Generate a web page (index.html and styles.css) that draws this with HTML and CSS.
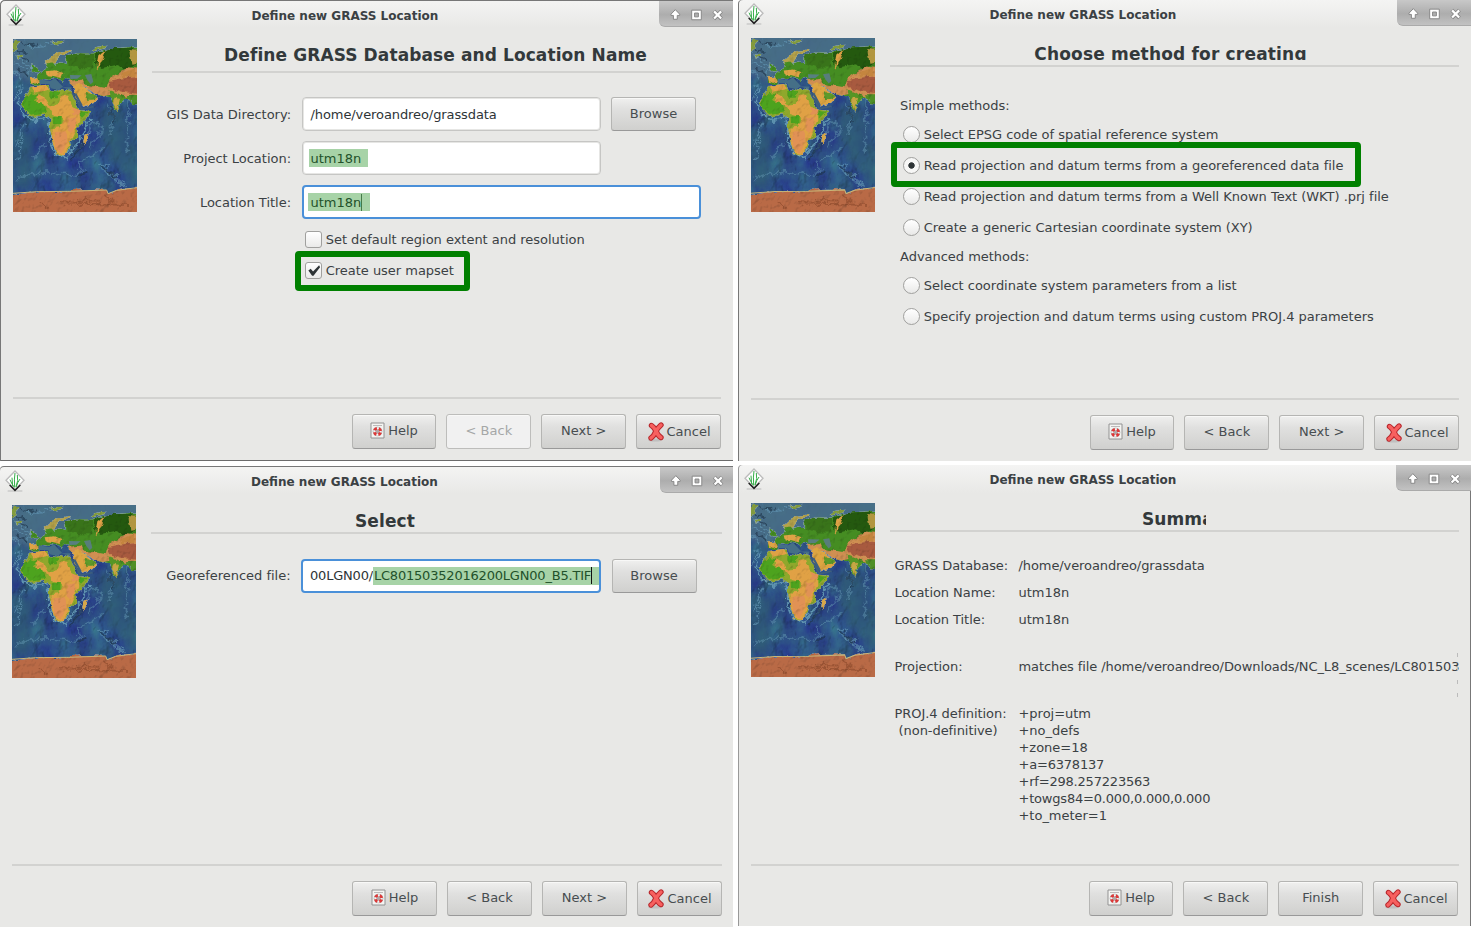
FILE: index.html
```html
<!DOCTYPE html>
<html lang="en">
<head>
<meta charset="utf-8">
<title>Define new GRASS Location</title>
<link rel="stylesheet" href="styles.css">
</head>
<body>
<svg class="defs" width="0" height="0" aria-hidden="true">
  <defs>
    <filter id="sea" x="0" y="0" width="100%" height="100%" color-interpolation-filters="sRGB">
      <feTurbulence type="fractalNoise" baseFrequency="0.018 0.013" numOctaves="5" seed="12" result="n"/>
      <feDiffuseLighting in="n" surfaceScale="8" diffuseConstant="1.2" lighting-color="#fff" result="l"><feDistantLight azimuth="215" elevation="60"/></feDiffuseLighting>
      <feColorMatrix in="n" type="matrix" values="0.1 0 0 0 0.13  0.35 0 0 0 0.15  0 0.1 0 0 0.48  0 0 0 0 1" result="c"/>
      <feBlend in="c" in2="l" mode="multiply" result="m"/>
      <feComposite in="m" in2="SourceGraphic" operator="in"/>
    </filter>
    <filter id="land" x="-5%" y="-5%" width="110%" height="110%" color-interpolation-filters="sRGB">
      <feTurbulence type="fractalNoise" baseFrequency="0.05" numOctaves="3" seed="5" result="n"/>
      <feDisplacementMap in="SourceGraphic" in2="n" scale="15" xChannelSelector="R" yChannelSelector="G" result="d"/>
      <feDiffuseLighting in="n" surfaceScale="2.5" diffuseConstant="1.17" lighting-color="#fff" result="l"><feDistantLight azimuth="225" elevation="60"/></feDiffuseLighting>
      <feBlend in="d" in2="l" mode="multiply" result="m"/>
      <feComposite in="m" in2="d" operator="in"/>
    </filter>
    <filter id="soft"><feGaussianBlur stdDeviation="1.5"/></filter>
    <filter id="ridge" x="-5%" y="-5%" width="110%" height="110%">
      <feTurbulence type="fractalNoise" baseFrequency="0.06" numOctaves="3" seed="8" result="n"/>
      <feDisplacementMap in="SourceGraphic" in2="n" scale="28" xChannelSelector="R" yChannelSelector="G" result="d"/>
      <feGaussianBlur in="d" stdDeviation="1.4"/>
    </filter>
    <filter id="haze"><feGaussianBlur stdDeviation="9"/></filter>
    <symbol id="map" viewBox="39 117 372 519" preserveAspectRatio="none">
      <rect x="39" y="117" width="372" height="519" filter="url(#sea)"/>
      <path d="M20 100H430V185L250 190L90 245L20 220Z" fill="#4b7187" opacity=".85" filter="url(#haze)"/>
      <path d="M39 390L110 400L90 560L39 560ZM300 330L330 480L411 560V440L360 300Z" fill="#2f5a72" opacity=".6" filter="url(#haze)"/>
      <g fill="none" stroke="#5f93b0" filter="url(#ridge)">
        <path d="M68 260Q50 300 64 340L105 362L145 356L151 425L168 465L198 477L226 435L248 410L268 355" stroke-width="5"/>
        <path d="M46 540Q95 510 180 522T235 487L310 448M230 450Q270 410 272 370Q300 360 305 395L270 440M98 475L138 430M384 300L382 460M320 305L340 350L330 410M240 520L260 505M300 500Q330 530 380 555" stroke-width="5" opacity=".5"/>
        <path d="M43 165L100 205M47 188L90 220M65 125Q90 150 120 142L165 127M42 210L66 240M44 300L58 260M70 370L48 440M70 400L52 480M300 485L325 500L322 520L350 525L345 545L375 550" stroke-width="4" opacity=".7"/>
      </g>
      <g fill="none" stroke="#1c3147" stroke-width="6" opacity=".6" filter="url(#ridge)"><path d="M62 126Q90 145 113 128M58 170L90 181M52 208L86 230M210 482L250 425M330 320L345 370M50 148L80 160M232 530L262 515M305 495L350 535"/></g>
      <g filter="url(#land)">
        <path d="M39 122L58 123L52 145L39 155ZM50 166L73 167L70 174L53 175ZM150 125L193 122L189 130L164 134ZM272 150Q287 138 320 137L316 145L280 154Z" fill="#829b3d"/>
        <path d="M94 193L112 200L121 216L105 217L96 209ZM120 217L137 207L143 191L160 182L164 194L180 187L198 191L196 178L214 171L243 160L277 164L302 152L337 145L420 139V310L399 302L389 292L369 300L357 317L349 336L339 315L328 291L300 288L282 277L263 265L249 255L215 258L204 248L210 240L197 233L189 246L175 235L159 232L148 240L130 237L117 254L92 254L90 236L110 233L114 222Z" fill="#458d22"/>
        <path d="M133 187L158 165L177 155L208 151L212 157L187 164L174 178L170 190L151 191L138 194Z" fill="#b4a24b"/>
        <path d="M289 160L331 145L400 143L411 153V190L385 211L349 195L305 204L285 190Z" fill="#24590f"/>
        <path d="M199 169L231 160L284 160L279 205L237 205L203 193Z" fill="#39741a"/>
        <path d="M91 234L111 232L116 244L97 252ZM137 214L165 211L190 222L185 234L164 228L140 226ZM290 210L298 166L318 150L312 168L300 195Z" fill="#dfa346"/>
        <path d="M205 242L247 239L255 254L279 257L319 264L328 238L361 217L389 202L420 208V303L384 292L353 282L332 284L309 289L278 279L254 261L215 257Z" fill="#cf8f52"/>
        <path d="M326 243L368 235L420 231V282L367 276L333 264Z" fill="#a85a3f"/>
        <path d="M364 219L409 205L406 230L366 232Z" fill="#c4853f"/>
        <path d="M388 150L420 152V190L394 194Z" fill="#b29640"/>
        <path d="M219 260L233 248L266 272L295 296L283 310L247 321L229 294Z" fill="#dda542"/>
        <path d="M255 274L294 292L280 299L261 299Z" fill="#5d9a2a"/>
        <path d="M328 270L353 279L375 296L359 313L350 336L339 319Z" fill="#569626"/>
        <path d="M345 292L360 297L350 337L338 303Z" fill="#c7a744"/>
        <path d="M380 285L420 285V315L400 312Z" fill="#4f8f26"/>
        <path d="M90 264L118 255L146 255L151 269L174 273L186 264L214 272L225 302L238 330L270 334L256 361L231 386L235 409L216 423L209 446L186 468L169 465L157 427L149 377L151 355L134 345L94 353L70 329L66 300L79 281Z" fill="#8fa82c"/>
        <path d="M92 260L139 254L145 269L104 278ZM114 285L138 298L150 318L173 316L188 282L205 288L217 321L236 332L241 360L230 385L213 425L193 466L169 463L157 421L154 385L180 382L193 354L156 344L143 317L113 315Z" fill="#e0a145"/>
        <path d="M71 293L94 280L114 286L103 306L128 307L139 339L93 347L71 329ZM151 270L181 276L173 295L152 295ZM158 352L185 350L184 372L159 373ZM242 334L263 337L243 356Z" fill="#4da31e"/>
        <path d="M220 323L238 330L239 346L219 343ZM205 354L223 349L232 373L215 400L202 383ZM164 396L199 394L203 424L184 460L168 448Z" fill="#e19255"/>
        <path d="M250 407L266 400L262 421L252 437L247 426Z" fill="#d6a74b"/>
        <path d="M20 588L87 578L136 573L188 578L214 570L266 567L320 570L325 583L349 572L379 565L430 563V660H20Z" fill="#b96a46"/>
      </g>
      <path d="M218 278L246 325L279 318L282 322L244 331L214 280ZM229 280L248 316L243 318L222 282Z" fill="#3f5f7c"/>
      <path d="M255 225L274 222L280 245L272 253L262 240Z" fill="#587d7b"/>
      <path d="M210 225L245 226L232 236L211 237Z" fill="#587f80"/>
      <path d="M120 238L150 243L165 235L190 262L215 262L212 270L187 262L175 270L152 265L148 253L118 252Z" fill="#456f87"/>
      <path d="M39 580L110 575L210 574L320 570L324 581L350 571L411 563" fill="none" stroke="#c9b678" stroke-width="3"/>
      <path d="M230 600L302 602M120 605L145 625M180 610L390 615M310 585L340 605" fill="none" stroke="#74391f" stroke-width="6" opacity=".4" filter="url(#ridge)"/>
    </symbol>
    <symbol id="logo" viewBox="0 0 60 66">
      <path d="M8 63H52" stroke="#bbb" stroke-width="3"/>
      <path d="M30 3L57 31L30 59L3 31Z" fill="#fff" stroke="#bcbcbc" stroke-width="4"/>
      <path d="M14 45L30 61L46 45" fill="none" stroke="#222" stroke-width="4.500"/>
      <path d="M29 52Q27 24 30 9M28 52Q20 42 15 29M33 52Q37 37 45 27M23 48L21 23M33 50Q41 31 37 15" fill="none" stroke="#35ad48" stroke-width="3"/>
    </symbol>
    <symbol id="controls" viewBox="0 0 74 26">
      <path d="M15.500 9L20 13.700V15H17.500V19H13.500V15H11V13.700Z" fill="#fff" stroke="#858585" stroke-linejoin="round"/>
      <path d="M32.500 9.500H42.500V19.500H32.500ZM35.500 12.500H39.500V16.500H35.500Z" fill="#fff" fill-rule="evenodd" stroke="#858585"/>
      <path d="M55.500 10.500L63.500 18.500M63.500 10.500L55.500 18.500" stroke="#858585" stroke-width="4"/>
      <path d="M55.800 10.800L63.200 18.200M63.200 10.800L55.800 18.200" stroke="#fff" stroke-width="2.300"/>
    </symbol>
    <symbol id="help" viewBox="0 0 15 17">
      <path d="M1 1H14V16H1Z" fill="#f4f4f2" stroke="#929292"/>
      <path d="M3 3.500H12" stroke="#bbb"/>
      <circle cx="7.500" cy="9.500" r="4.800" fill="#a3a7a7"/>
      <circle cx="7.500" cy="9.500" r="3.200" fill="none" stroke="#f5f5f5" stroke-width="2"/>
      <circle cx="7.500" cy="9.500" r="3.200" fill="none" stroke="#dd3838" stroke-width="2.800" stroke-dasharray="3 2.027" stroke-dashoffset="-1.010"/>
      <circle cx="7.500" cy="9.500" r="1.400" fill="#b9a5a5"/>
    </symbol>
    <symbol id="cancel" viewBox="0 0 18 20">
      <ellipse cx="8" cy="18" rx="7" ry="1.600" fill="#aaa" opacity=".5"/>
      <path d="M4.500 3.500Q7 5 9 9Q11 14 14 15.500M14 3Q10.500 6 8.500 10Q7 14 4 16" fill="none" stroke="#b7272c" stroke-width="5.400" stroke-linecap="round"/>
      <path d="M4.500 3.500Q7 5 9 9Q11 14 14 15.500M14 3Q10.500 6 8.500 10Q7 14 4 16" fill="none" stroke="#f7605f" stroke-width="3.400" stroke-linecap="round"/>
    </symbol>
  </defs>
</svg>

<main class="screens">
  <section class="window w1">
    <header class="titlebar"><svg class="logo"><use href="#logo"/></svg><span class="caption">Define new GRASS Location</span><svg class="controls"><use href="#controls"/></svg></header>
    <div class="content">
      <svg class="map"><use href="#map"/></svg>
      <div class="page">
        <h1 class="heading">Define GRASS Database and Location Name</h1>
        <div class="form">
          <label>GIS Data Directory:</label><div class="field"><span class="value path">/home/veroandreo/grassdata</span></div><button class="btn">Browse</button>
          <label>Project Location:</label><div class="field"><span class="mark mark-a">utm18n</span></div>
          <label class="row-start">Location Title:</label><div class="field wide focus"><span class="mark mark-b">utm18n<i class="caret"></i></span></div>
        </div>
        <div class="checks">
          <div class="option"><span class="box"></span>Set default region extent and resolution</div>
          <div class="option"><span class="box"><svg viewBox="0 0 16 16"><path d="M2.500 8L5 6L7.500 9L14 2.500L15 4.500L8 13.500H6.500Z" fill="#2e3436"/></svg></span>Create user mapset<i class="outline outline-check"></i></div>
        </div>
      </div>
    </div>
    <footer class="actions"><button class="btn"><svg class="help"><use href="#help"/></svg>Help</button><button class="btn" disabled>&lt; Back</button><button class="btn">Next &gt;</button><button class="btn low"><svg class="cancel"><use href="#cancel"/></svg>Cancel</button></footer>
  </section>

  <section class="window w2">
    <header class="titlebar"><svg class="logo"><use href="#logo"/></svg><span class="caption">Define new GRASS Location</span><svg class="controls"><use href="#controls"/></svg></header>
    <div class="content">
      <svg class="map"><use href="#map"/></svg>
      <div class="page">
        <h1 class="heading"><span class="clip-low">Choose method for creating</span></h1>
        <div class="methods">
          <p class="group first">Simple methods:</p>
          <div class="option"><span class="radio"></span>Select EPSG code of spatial reference system</div>
          <div class="option"><span class="radio on"></span>Read projection and datum terms from a georeferenced data file<i class="outline outline-radio"></i></div>
          <div class="option"><span class="radio"></span>Read projection and datum terms from a Well Known Text (WKT) .prj file</div>
          <div class="option"><span class="radio"></span>Create a generic Cartesian coordinate system (XY)</div>
          <p class="group">Advanced methods:</p>
          <div class="option"><span class="radio"></span>Select coordinate system parameters from a list</div>
          <div class="option"><span class="radio"></span>Specify projection and datum terms using custom PROJ.4 parameters</div>
        </div>
      </div>
    </div>
    <footer class="actions"><button class="btn"><svg class="help"><use href="#help"/></svg>Help</button><button class="btn">&lt; Back</button><button class="btn">Next &gt;</button><button class="btn low"><svg class="cancel"><use href="#cancel"/></svg>Cancel</button></footer>
  </section>

  <section class="window w3">
    <header class="titlebar"><svg class="logo"><use href="#logo"/></svg><span class="caption">Define new GRASS Location</span><svg class="controls"><use href="#controls"/></svg></header>
    <div class="content">
      <svg class="map"><use href="#map"/></svg>
      <div class="page">
        <h1 class="heading"><span class="select">Select</span></h1>
        <div class="form">
          <label>Georeferenced file:</label><div class="field focus file"><span class="value">00LGN00/</span><span class="mark mark-c">LC80150352016200LGN00_B5.TIF<i class="caret dark"></i></span></div><button class="btn">Browse</button>
        </div>
      </div>
    </div>
    <footer class="actions"><button class="btn"><svg class="help"><use href="#help"/></svg>Help</button><button class="btn">&lt; Back</button><button class="btn">Next &gt;</button><button class="btn low"><svg class="cancel"><use href="#cancel"/></svg>Cancel</button></footer>
  </section>

  <section class="window w4">
    <header class="titlebar"><svg class="logo"><use href="#logo"/></svg><span class="caption">Define new GRASS Location</span><svg class="controls"><use href="#controls"/></svg></header>
    <div class="content">
      <svg class="map"><use href="#map"/></svg>
      <div class="page">
        <h1 class="heading"><span class="clip-side">Summa</span></h1>
        <dl class="summary">
          <dt>GRASS Database:</dt><dd class="path">/home/veroandreo/grassdata</dd>
          <dt>Location Name:</dt><dd>utm18n</dd>
          <dt>Location Title:</dt><dd>utm18n</dd>
          <dt class="spaced">Projection:</dt><dd class="spaced cut"><span class="path line">matches file /home/veroandreo/Downloads/NC_L8_scenes/LC801503</span><i class="dashes"></i></dd>
          <dt class="spaced">PROJ.4 definition:<br>&nbsp;(non-definitive)</dt><dd class="spaced">+proj=utm<br>+no_defs<br>+zone=18<br><span class="digits">+a=6378137<br>+rf=298.257223563<br>+towgs84=0.000,0.000,0.000</span><br>+to_meter=1</dd>
        </dl>
      </div>
    </div>
    <footer class="actions"><button class="btn"><svg class="help"><use href="#help"/></svg>Help</button><button class="btn">&lt; Back</button><button class="btn">Finish</button><button class="btn low"><svg class="cancel"><use href="#cancel"/></svg>Cancel</button></footer>
  </section>
</main>
</body>
</html>
```

FILE: styles.css
```css
* { box-sizing: border-box; }
body { margin: 0; background: #fff; font: 13px/17px "DejaVu Sans", sans-serif; letter-spacing: -.02px; color: #3b4144; overflow: hidden; }
.defs { position: absolute; }
svg { display: block; flex: none; }
p, dl, dd { margin: 0; }
i { font-style: normal; }

.screens { display: grid; grid-template-columns: 733px 733px; column-gap: 5px; grid-template-rows: 465px 462px; width: 1471px; height: 927px; }
.window { display: flex; flex-direction: column; height: 461px; background: linear-gradient(#f4f4f3, #e8e8e6 28px); overflow: hidden; }
.w1 { border-radius: 5px 0 0; box-shadow: inset 1px 0 #777, inset 0 -1px #6b6b6b, inset 0 1px #777; }
.w2 { border-radius: 4px 0 0; box-shadow: inset 1px 0 #777; }
.w3 { margin-top: 1px; border-radius: 4px 0 0; box-shadow: inset 0 1px #777; }
.w4 { border-radius: 4px 0 0; box-shadow: inset 1px 0 #999, inset -1px 0 #777; }

.titlebar { display: flex; align-items: flex-start; height: 39px; padding: 4px 0 0 6px; flex: none; }
.logo { width: 20px; height: 22px; }
.caption { width: 190px; margin: 4px 0 0 225.500px; font-size: 12px; font-weight: bold; white-space: nowrap; letter-spacing: 0; }
.controls { width: 74px; height: 26px; margin: -3px 0 0 auto; background: linear-gradient(#c8c8c8, #adadad 55%, #c2c2c2); border-bottom: 1px solid #aaa; border-radius: 0 0 0 6px; }
.w2 .titlebar, .w4 .titlebar { height: 38px; padding-top: 3px; }
.w3 .titlebar { padding-left: 5px; }
.w3 .caption { margin-left: 226px; }
.w3 .controls { width: 73px; }
.w4 .controls { width: 75px; }

.content { display: flex; gap: 15px; flex: 0 0 360px; margin: 0 12px 0 13px; border-bottom: 2px solid #d2d2d0; }
.w2 .content { flex-basis: 362px; }
.w3 .content { margin: 0 11px 0 12px; flex-basis: 361px; }
.w4 .content { flex-basis: 363px; }
.map { width: 124px; height: 173px; }
.w2 .map, .w4 .map { height: 174px; }
.page { flex: 1; min-width: 0; }
.heading { height: 34px; margin: 0; padding-top: 5px; border-bottom: 2px solid #d2d2d0; text-align: center; text-indent: -2px; font-size: 17px; line-height: 22px; letter-spacing: .1px; font-weight: bold; white-space: nowrap; color: #33393b; }
.w2 .heading, .w3 .heading, .w4 .heading { height: 29px; }
.clip-low { display: inline-block; height: 17px; overflow: hidden; margin-right: 6px; text-indent: 0; letter-spacing: .18px; }
.select { margin-right: 101px; }
.clip-side { display: block; width: 64px; margin-left: 252px; overflow: hidden; text-indent: 0; text-align: left; }

.form { display: grid; grid-template-columns: 139px 299px 85px; column-gap: 10.500px; row-gap: 10px; align-items: center; padding-top: 24px; }
.form label { text-align: right; white-space: nowrap; }
.form .btn { height: 34px; }
.row-start { grid-column: 1; }
.field { display: flex; align-items: center; height: 34px; padding: 0 8px; background: #fff; border: 1px solid #c6c6c4; border-radius: 4px; box-shadow: inset 0 0 0 1px #e6e6e4; color: #2e3436; white-space: nowrap; overflow: hidden; }
.field.wide { grid-column: 2 / span 2; width: 399px; }
.field.focus { padding: 0 7px; border: 2px solid #4a90d9; box-shadow: none; }
.w3 .form { grid-template-columns: 139.500px 300px 85px; padding-top: 25px; }
.w3 .form label { margin-top: -1px; }
.mark { display: flex; align-items: center; height: 18px; background: #a7d3a7; color: #22512a; }
.mark-a { margin-left: -2px; padding: 0 7px 0 2px; }
.mark-b { margin-left: -3px; padding: 0 8px 0 3px; }
.mark-c { padding: 0 8px 0 1px; }
.caret { width: 1px; height: 17px; background: #457a49; }
.caret.dark { background: #111; }
.field.file { padding-right: 0; padding-bottom: 1px; letter-spacing: -.2px; }
.path { letter-spacing: -.09px; }

.btn { display: flex; align-items: center; justify-content: center; gap: 3px; width: 85px; height: 35px; padding: 0 0 2px; font: inherit; letter-spacing: 0; color: #474d50; background: linear-gradient(#f0f0ef, #e0e0df 35%, #d0d0ce); border: 1px solid #b5b5b3; border-bottom-color: #999; border-radius: 3px; box-shadow: inset 0 1px #f8f8f7; white-space: nowrap; }
.form .btn { padding-bottom: 1px; }
.btn:disabled { background: #f1f1f1; color: #a5a7a7; border-color: #bdbdbb; }
.low { padding-bottom: 0; gap: 2px; }
.help { width: 15px; height: 17px; }
.cancel { width: 18px; height: 20px; }
.actions { display: flex; justify-content: flex-end; gap: 10px; padding: 15px 12px 0 0; }
.actions .btn { width: 84.850px; }
.w3 .actions .btn { width: 85px; }
.w3 .actions { padding-right: 11px; }
.w4 .actions { padding: 15px 13px 0 0; }

.checks { display: flex; flex-direction: column; gap: 14px; padding: 12px 0 0 153px; }
.option { position: relative; display: flex; align-items: center; height: 17px; gap: 3.700px; white-space: nowrap; }
.box { width: 17px; height: 17px; border: 1px solid #a0a09e; border-radius: 3px; background: linear-gradient(#fff, #eaeae9); }
.box svg { width: 15px; height: 15px; }
.outline { position: absolute; border: 6px solid #008000; border-radius: 4px; }
.outline-check { left: -10px; top: -11px; width: 175px; height: 40px; }
.outline-radio { left: -12px; top: -15px; width: 470px; height: 45px; }

.methods { display: flex; flex-direction: column; gap: 14px; padding: 30px 0 0 13px; }
.group { margin: -2px 0 -2px -3px; height: 17px; }
.group.first { margin: 0 0 -2px -3px; }
.radio { width: 17px; height: 17px; border: 1px solid #a0a09e; border-radius: 50%; background: linear-gradient(#fff, #e9e9e8); }
.radio.on { background: radial-gradient(circle, #2e3436 0 2.800px, #f7f7f6 3.600px); }

.summary { display: grid; grid-template-columns: 124px 1fr; row-gap: 10px; padding: 25px 0 0 4.500px; }
.summary dt { white-space: nowrap; letter-spacing: -.06px; }
.summary .spaced { margin-top: 20px; }
.digits { letter-spacing: -.2px; }
.cut { position: relative; min-width: 0; }
.line { display: block; overflow: hidden; white-space: nowrap; }
.dashes { position: absolute; right: 1px; top: -5px; width: 1px; height: 44px; background: repeating-linear-gradient(#bbb 0 4px, transparent 4px 13.500px); }
```
